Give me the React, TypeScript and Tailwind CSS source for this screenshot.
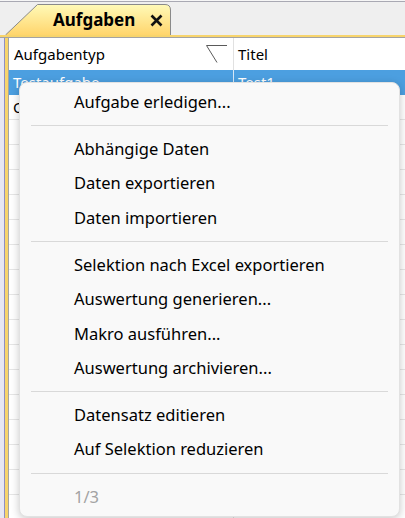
const ROW_COUNT = 18

type MenuEntry = { label: string; disabled?: boolean } | 'sep'

const menu: MenuEntry[] = [
  { label: 'Aufgabe erledigen...' },
  'sep',
  { label: 'Abhängige Daten' },
  { label: 'Daten exportieren' },
  { label: 'Daten importieren' },
  'sep',
  { label: 'Selektion nach Excel exportieren' },
  { label: 'Auswertung generieren...' },
  { label: 'Makro ausführen...' },
  { label: 'Auswertung archivieren...' },
  'sep',
  { label: 'Datensatz editieren' },
  { label: 'Auf Selektion reduzieren' },
  'sep',
  { label: '1/3', disabled: true },
]

const rows = [
  { typ: 'Testaufgabe', titel: 'Test1', selected: true },
  { typ: 'Offen', titel: 'Test2' },
]

function Tab() {
  return (
    <div className="relative ml-[5px] flex h-[31px] w-[166px] items-center">
      <svg className="absolute inset-0" width="166" height="31" viewBox="0 0 166 31">
        <defs>
          <linearGradient id="tabFill" x1="0" y1="0" x2="0" y2="1">
            <stop offset="0" stopColor="#fffab8" />
            <stop offset="1" stopColor="#ffd56c" />
          </linearGradient>
        </defs>
        <path d="M0.5 31 L32.5 0.5 H160 Q165.5 0.5 165.5 6 V31 Z" fill="url(#tabFill)" />
        <path d="M0.5 31 L32.5 0.5 H160 Q165.5 0.5 165.5 6 V31" fill="none" stroke="#8a8a8a" />
      </svg>
      <span className="relative ml-[48px] text-[17px] font-bold text-black">Aufgaben</span>
      <svg className="relative ml-[15px] mt-[1px]" width="13" height="13" viewBox="0 0 13 13">
        <path d="M1.5 1.5 L11.5 11.5 M11.5 1.5 L1.5 11.5" stroke="#111" strokeWidth="2.6" />
      </svg>
    </div>
  )
}

function SortMark() {
  return (
    <svg width="22" height="18" viewBox="0 0 22 18">
      <path d="M0.5 0.5 H21 M0.5 0.5 L11 17.5" stroke="#5a5a5a" fill="none" />
    </svg>
  )
}

function ContextMenu() {
  return (
    <div className="absolute left-[19px] top-[82px] w-[381px] rounded-[8px] border border-[#e2e2e2] bg-[#f9f9f9] pt-[2px] pb-[2px] shadow-[0_2px_8px_rgba(0,0,0,0.22)]">
      {menu.map((m, i) =>
        m === 'sep' ? (
          <div key={i} className="mx-[11px] my-[6px] h-px bg-[#d9d9d9]" />
        ) : (
          <div
            key={i}
            className={`flex h-[34.3px] items-center pl-[54px] text-[16.5px] ${m.disabled ? 'text-[#a3a3a3]' : 'text-black'}`}
          >
            {m.label}
          </div>
        ),
      )}
    </div>
  )
}

export default function App() {
  return (
    <div className="relative h-[518px] w-[405px] overflow-hidden bg-[#efefef] font-['Noto_Sans',sans-serif]">
      <div className="h-px bg-[#f6f6f6]" />
      <div className="h-px bg-[#a9a9b3]" />
      <div className="flex h-[33px] items-end">
        <Tab />
      </div>
      <div className="h-[2px] bg-[#f7d46c]" />
      <div className="h-px bg-[#a3a3a3]" />

      <div className="flex">
        {/* frame on the left side of the grid */}
        <div className="w-[4px] bg-[#e7e7f3]" />
        <div className="w-px bg-[#8f8fc2]" />
        <div className="w-[3px] bg-[#f7d46c]" />
        <div className="w-px bg-[#a3a3a3]" />

        <div className="flex-1 bg-white">
          <div className="flex h-[32px] text-[15px] text-black">
            <div className="flex w-[225px] items-center justify-between border-r border-[#e1e1e1] pl-[5px] pr-[5px]">
              <span>Aufgabentyp</span>
              <SortMark />
            </div>
            <div className="flex flex-1 items-center pl-[4px]">Titel</div>
          </div>
          {Array.from({ length: ROW_COUNT }).map((_, i) => {
            const r = rows[i]
            return (
              <div
                key={i}
                className={`flex h-[25px] text-[15px] ${r?.selected ? 'bg-[#4c9fe0] text-white' : 'border-b border-[#e6e6e6] text-black'}`}
              >
                <div className={`flex w-[225px] items-center border-r pl-[4px] ${r?.selected ? 'border-[#d7e8f7]' : 'border-[#e1e1e1]'}`}>
                  {r?.typ}
                </div>
                <div className="flex flex-1 items-center pl-[4px]">{r?.titel}</div>
              </div>
            )
          })}
        </div>
      </div>

      <ContextMenu />
    </div>
  )
}
